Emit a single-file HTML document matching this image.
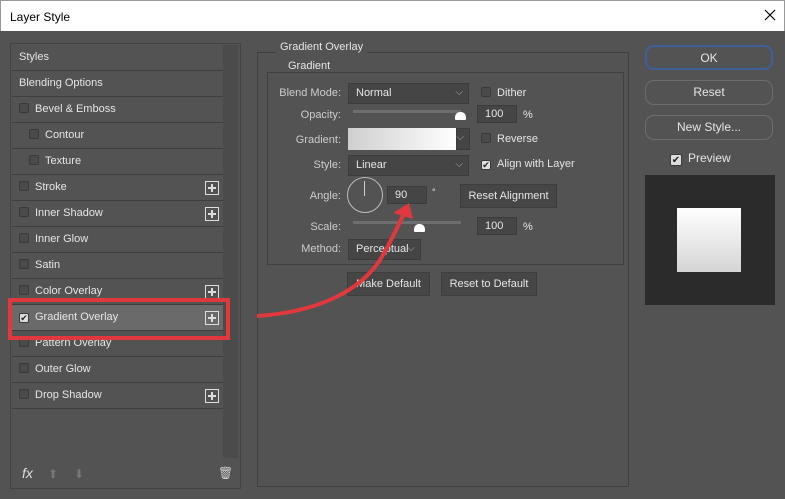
<!DOCTYPE html>
<html><head><style>
*{box-sizing:border-box;margin:0;padding:0}
body{width:785px;height:499px;background:#535353;font-family:"Liberation Sans",sans-serif;font-size:11px;color:#e6e6e6;position:relative;overflow:hidden}
.a{position:absolute}
.title{left:0;top:0;width:785px;height:31px;background:#fff;color:#000;font-size:12px;padding:9px 0 0 9px;border:1px solid #999;border-bottom:none}
.row{position:absolute;left:12px;width:211px;height:26px;border-bottom:1px solid #3e3e3e;background:#535353;line-height:25px;padding-left:7px}
.cb{display:inline-block;width:10px;height:10px;border:1px solid #3a3a3a;background:#4a4a4a;border-radius:2px;vertical-align:-1px;margin-right:6px}
.plus{position:absolute;right:4px;top:6px;width:14px;height:14px;border:1px solid #ddd}
.plus:before{content:"";position:absolute;left:2px;top:5px;width:8px;height:2px;background:#ddd}
.plus:after{content:"";position:absolute;left:5px;top:2px;width:2px;height:8px;background:#ddd}
.lbl{position:absolute;text-align:right;width:80px;left:261px;color:#ccc}
.fld{position:absolute;background:#454545;border:1px solid #3c3c3c;padding-left:7px;line-height:19px;height:21px}
.dd:after{content:"⌵";position:absolute;right:5px;top:-1px;color:#aaa;font-size:10px}
.btn{position:absolute;background:#464646;border:1px solid #3e3e3e;text-align:center;line-height:22px;height:24px}
.rb{position:absolute;left:645px;width:128px;height:25px;border:1px solid #6d6d6d;border-radius:9px;text-align:center;line-height:23px;font-size:12px}
.sld{position:absolute;height:3px;background:#6e6e6e}
.thumb{position:absolute;width:11px;height:8px;background:#fff;border-radius:5px 5px 1px 1px}
</style></head><body>
<div class="a title">Layer Style</div>
<svg class="a" style="left:764px;top:9px" width="12" height="12"><path d="M1 1L11 11M11 1L1 11" stroke="#000" stroke-width="1.2"/></svg>

<div class="a" style="left:10px;top:43px;width:231px;height:446px;border:1px solid #434343"></div>
<div class="a" style="left:223px;top:45px;width:15px;height:413px;background:#4b4b4b"></div>
<div class="row" style="top:45px">Styles</div>
<div class="row" style="top:71px">Blending Options</div>
<div class="row" style="top:97px"><span class="cb"></span>Bevel &amp; Emboss</div>
<div class="row" style="top:123px;padding-left:17px"><span class="cb"></span>Contour</div>
<div class="row" style="top:149px;padding-left:17px"><span class="cb"></span>Texture</div>
<div class="row" style="top:175px"><span class="cb"></span>Stroke<div class="plus"></div></div>
<div class="row" style="top:201px"><span class="cb"></span>Inner Shadow<div class="plus"></div></div>
<div class="row" style="top:227px"><span class="cb"></span>Inner Glow</div>
<div class="row" style="top:253px"><span class="cb"></span>Satin</div>
<div class="row" style="top:279px"><span class="cb"></span>Color Overlay<div class="plus"></div></div>
<div class="row" style="top:305px;background:#6a6a6a"><span class="cb" style="background:#ddd;color:#222;font-size:9px;line-height:9px;text-align:center">✔</span>Gradient Overlay<div class="plus"></div></div>
<div class="row" style="top:331px"><span class="cb"></span>Pattern Overlay</div>
<div class="row" style="top:357px"><span class="cb"></span>Outer Glow</div>
<div class="row" style="top:383px"><span class="cb"></span>Drop Shadow<div class="plus"></div></div>
<div class="a" style="left:8px;top:298px;width:222px;height:42px;border:4px solid #e0383c"></div>
<div class="a" style="left:22px;top:465px;font-style:italic;font-size:14px;color:#ddd">fx</div>
<div class="a" style="left:48px;top:467px;color:#777;font-size:12px">⬆</div>
<div class="a" style="left:74px;top:467px;color:#777;font-size:12px">⬇</div>
<div class="a" style="left:218px;top:466px;color:#ccc;font-size:12px">🗑</div>

<div class="a" style="left:257px;top:52px;width:372px;height:435px;border:1px solid #404040"></div>
<div class="a" style="left:276px;top:41px;background:#535353;padding:0 4px">Gradient Overlay</div>
<div class="a" style="left:267px;top:72px;width:357px;height:193px;border:1px solid #404040"></div>
<div class="a" style="left:285px;top:60px;background:#535353;padding:0 3px">Gradient</div>

<div class="lbl" style="top:87px">Blend Mode:</div>
<div class="fld dd" style="left:348px;top:83px;width:121px">Normal</div>
<div class="a" style="left:481px;top:87px"><span class="cb"></span>Dither</div>
<div class="lbl" style="top:109px">Opacity:</div>
<div class="sld" style="left:353px;top:110px;width:108px"></div>
<div class="thumb" style="left:455px;top:112px"></div>
<div class="fld" style="left:477px;top:105px;width:40px;height:18px;line-height:16px">100</div>
<div class="a" style="left:523px;top:109px">%</div>
<div class="lbl" style="top:134px">Gradient:</div>
<div class="a" style="left:348px;top:128px;width:108px;height:22px;background:linear-gradient(90deg,#cfcfcf,#fff)"></div>
<div class="fld dd" style="left:456px;top:128px;width:14px;height:22px;padding:0"></div>
<div class="a" style="left:481px;top:133px"><span class="cb"></span>Reverse</div>
<div class="lbl" style="top:159px">Style:</div>
<div class="fld dd" style="left:348px;top:155px;width:121px">Linear</div>
<div class="a" style="left:481px;top:158px"><span class="cb" style="background:#ddd;color:#222;font-size:9px;line-height:9px;text-align:center">✔</span>Align with Layer</div>
<div class="lbl" style="top:190px">Angle:</div>
<div class="a" style="left:347px;top:177px;width:36px;height:36px;border:1px solid #bbb;border-radius:50%"></div>
<div class="a" style="left:364px;top:181px;width:1px;height:15px;background:#ccc"></div>
<div class="fld" style="left:387px;top:186px;width:40px;height:18px;line-height:16px">90</div>
<div class="a" style="left:432px;top:187px;font-size:9px">°</div>
<div class="btn" style="left:460px;top:184px;width:97px">Reset Alignment</div>
<div class="lbl" style="top:221px">Scale:</div>
<div class="sld" style="left:353px;top:221px;width:108px"></div>
<div class="thumb" style="left:414px;top:224px"></div>
<div class="fld" style="left:477px;top:217px;width:40px;height:18px;line-height:16px">100</div>
<div class="a" style="left:523px;top:221px">%</div>
<div class="lbl" style="top:243px">Method:</div>
<div class="fld dd" style="left:348px;top:239px;width:73px;padding-left:7px">Perceptual</div>
<div class="btn" style="left:347px;top:272px;width:83px">Make Default</div>
<div class="btn" style="left:441px;top:272px;width:96px">Reset to Default</div>

<svg class="a" style="left:0;top:0" width="785" height="499">
<path d="M257 316 C320 312 360 290 380 260 C392 240 398 225 405 212" fill="none" stroke="#e0383c" stroke-width="4"/>
<path d="M409 203 L393 213 L413 219 Z" fill="#e0383c"/>
</svg>

<div class="rb" style="top:45px;border-color:#3f5f9a;border-width:2px">OK</div>
<div class="rb" style="top:80px">Reset</div>
<div class="rb" style="top:115px">New Style...</div>
<div class="a" style="left:670px;top:151px;font-size:12px"><span class="cb" style="width:12px;height:12px;background:#ddd;color:#222;font-size:10px;line-height:11px;text-align:center">✔</span>Preview</div>
<div class="a" style="left:645px;top:175px;width:130px;height:130px;background:#2b2b2b"></div>
<div class="a" style="left:677px;top:208px;width:64px;height:64px;background:linear-gradient(#fff,#d5d5d5)"></div>
</body></html>
